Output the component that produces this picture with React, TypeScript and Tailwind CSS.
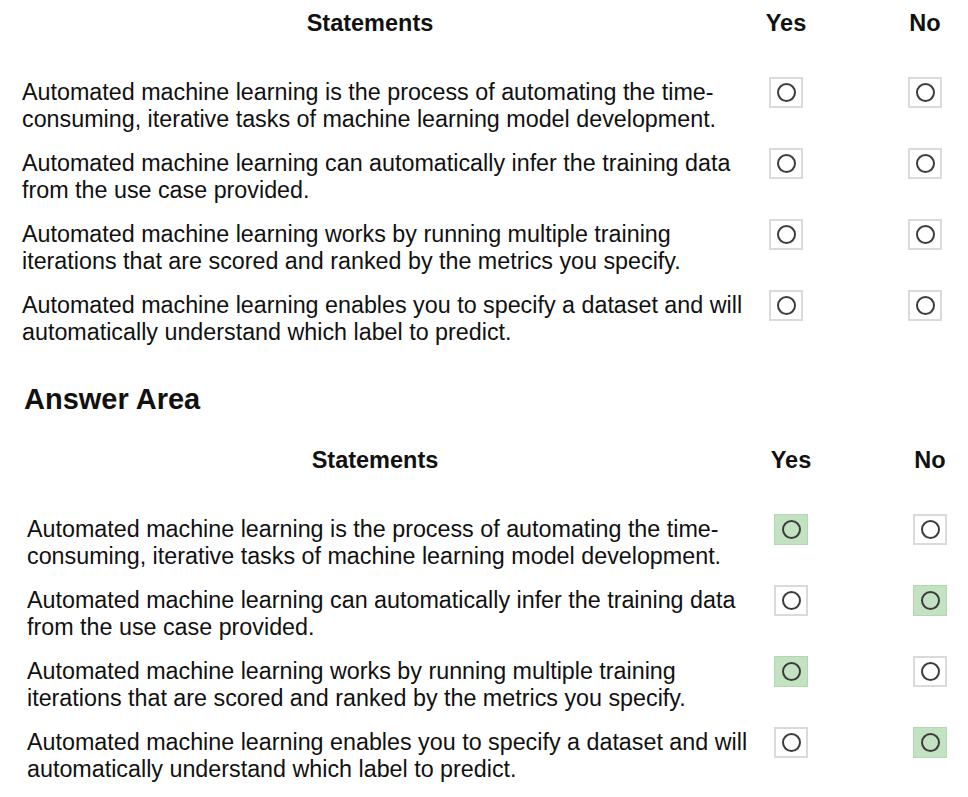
import React from 'react';

interface Statement {
  text: [string, string];
  answer?: 'yes' | 'no';
}

const statements: [string, string][] = [
  ['Automated machine learning is the process of automating the time-', 'consuming, iterative tasks of machine learning model development.'],
  ['Automated machine learning can automatically infer the training data', 'from the use case provided.'],
  ['Automated machine learning works by running multiple training', 'iterations that are scored and ranked by the metrics you specify.'],
  ['Automated machine learning enables you to specify a dataset and will', 'automatically understand which label to predict.'],
];

const answers: ('yes' | 'no')[] = ['yes', 'no', 'yes', 'no'];

const RadioBox: React.FC<{ selected?: boolean }> = ({ selected }) => (
  <div
    className={
      selected
        ? 'flex h-[31px] w-[34px] shrink-0 items-center justify-center border border-[#b4d6b3] bg-[#c3e2c2]'
        : 'flex h-[31px] w-[34px] shrink-0 items-center justify-center border-2 border-[#dadada] bg-white'
    }
  >
    <div className="h-[19px] w-[19px] rounded-full border-2 border-[#3c3c3c]" />
  </div>
);

const Table: React.FC<{ items: Statement[]; offset: string }> = ({ items, offset }) => (
  <div className={offset}>
    <div className="flex h-[48px] items-center font-bold text-[23.5px] text-[#111]">
      <div className="w-[747px] pr-[51px] text-center">Statements</div>
      <div className="flex w-[34px] justify-center">Yes</div>
      <div className="ml-[105px] flex w-[34px] justify-center">No</div>
    </div>
    <div className="mt-[31px] flex flex-col gap-[17px]">
      {items.map((item, i) => (
        <div key={i} className="flex items-start">
          <div className="w-[747px] whitespace-nowrap text-[23.3px] leading-[27px] text-[#111]">
            <div>{item.text[0]}</div>
            <div>{item.text[1]}</div>
          </div>
          <div className="-mt-[2px] flex">
            <RadioBox selected={item.answer === 'yes'} />
            <div className="ml-[105px]">
              <RadioBox selected={item.answer === 'no'} />
            </div>
          </div>
        </div>
      ))}
    </div>
  </div>
);

export default function App() {
  return (
    <div className="h-[797px] w-[968px] overflow-hidden bg-white font-['Liberation_Sans',Arial,sans-serif]">
      <Table items={statements.map((text) => ({ text }))} offset="pl-[22px]" />
      <div className="mt-[37px] pl-[24px] text-[29px] font-bold leading-[32px] text-[#111]">Answer Area</div>
      <div className="mt-[22px]">
        <Table
          items={statements.map((text, i) => ({ text, answer: answers[i] }))}
          offset="pl-[27px]"
        />
      </div>
    </div>
  );
}
